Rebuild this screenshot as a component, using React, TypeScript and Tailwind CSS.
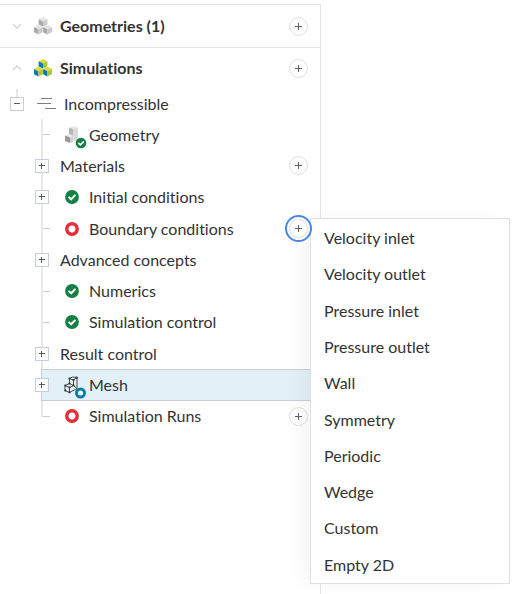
import React from "react";

type Status = "done" | "open";
type Node = {
  label: string;
  icon?: "geometry" | "mesh" | Status;
  expandable?: boolean;
  add?: boolean;
  selected?: boolean;
  menu?: string[];
};

const boundaryTypes = [
  "Velocity inlet",
  "Velocity outlet",
  "Pressure inlet",
  "Pressure outlet",
  "Wall",
  "Symmetry",
  "Periodic",
  "Wedge",
  "Custom",
  "Empty 2D",
];

const nodes: Node[] = [
  { label: "Geometry", icon: "geometry" },
  { label: "Materials", expandable: true, add: true },
  { label: "Initial conditions", icon: "done", expandable: true },
  { label: "Boundary conditions", icon: "open", add: true, menu: boundaryTypes },
  { label: "Advanced concepts", expandable: true },
  { label: "Numerics", icon: "done" },
  { label: "Simulation control", icon: "done" },
  { label: "Result control", expandable: true },
  { label: "Mesh", icon: "mesh", expandable: true, selected: true },
  { label: "Simulation Runs", icon: "open", add: true },
];

function Cube({ x, y, top, left, right }: { x: number; y: number; top: string; left: string; right: string }) {
  return (
    <g transform={`translate(${x} ${y})`}>
      <path d="M0 2.2 4.4 0 8.8 2.2 4.4 4.4Z" fill={top} />
      <path d="M0 2.2 4.4 4.4V9.6L0 7.4Z" fill={left} />
      <path d="M8.8 2.2 4.4 4.4V9.6L8.8 7.4Z" fill={right} />
    </g>
  );
}

function Cubes({ colored }: { colored?: boolean }) {
  const c = colored
    ? { top: "#e3d935", left: "#0b7aad", right: "#a5c63b" }
    : { top: "#e6e6e6", left: "#aaaaaa", right: "#cbcbcb" };
  return (
    <svg width="18" height="18" viewBox="0 0 18 18" aria-hidden="true">
      <Cube x={4.6} y={0} {...c} />
      <Cube x={0} y={7.8} {...c} />
      <Cube x={9.1} y={7.8} {...c} />
    </svg>
  );
}

function StatusIcon({ status, size }: { status: Status; size: number }) {
  return (
    <svg width={size} height={size} viewBox="0 0 14 14" aria-hidden="true">
      {status === "done" ? (
        <>
          <circle cx="7" cy="7" r="6.9" fill="#118042" />
          <path d="m3.6 6.9 2.5 2.4 4.4-4.4" fill="none" stroke="#fff" strokeWidth="2" />
        </>
      ) : (
        <circle cx="7" cy="7" r="5.200" fill="#fff" stroke="#e52e3a" strokeWidth="3.5" />
      )}
    </svg>
  );
}

function GeometryIcon() {
  return (
    <svg width="24" height="28" viewBox="0 0 24 28" aria-hidden="true">
      <path d="M6 6.5 10.5 5 15 6.500 10.500 8.500Z" fill="#e8e8e8" />
      <path d="M6 6.500 10.500 8.500V15L6 13Z" fill="#b4b4b4" />
      <path d="M15 6.500V18.500L10.500 20.500V8.500Z" fill="#d9d9d9" />
      <path d="M2 14.500 6 13 10.500 15 7 16.500Z" fill="#e9e9e9" />
      <path d="M2 14.500 7 16.500V22L2 20Z" fill="#989898" />
      <path d="M7 16.500 10.500 15V20.500L7 22Z" fill="#cfcfcf" />
      <circle cx="18" cy="22" r="5.300" fill="#118042" />
      <path d="m15.300 21.900 2 2 3.600-3.600" fill="none" stroke="#fff" strokeWidth="1.700" />
    </svg>
  );
}

function MeshIcon() {
  return (
    <svg width="24" height="28" viewBox="0 0 24 28" aria-hidden="true">
      <g fill="none" stroke="#4a4a4a" strokeWidth="1" strokeLinejoin="round">
        <path d="M6.500 7.500 9.500 6 14 6.500V17.500L6.500 21.500 2 19.500V14.500L6.500 12.500Z" />
        <path d="M6.500 7.500 10.500 9 14 6.500M10.500 9V14.500L6.500 16.500V21.500M2 14.500 6.500 16.500M6.500 12.500 10.500 14.500 14 17.500" />
      </g>
      <g fill="#333">
        <circle cx="6.500" cy="7.500" r="1.100" />
        <circle cx="10.500" cy="9" r="1.100" />
        <circle cx="13.800" cy="6.600" r="1.100" />
        <circle cx="2.300" cy="14.500" r="1.100" />
        <circle cx="6.500" cy="16.500" r="1.100" />
        <circle cx="10.500" cy="14.500" r="1.100" />
        <circle cx="2.300" cy="19.500" r="1.100" />
        <circle cx="6.500" cy="21.300" r="1.100" />
        <circle cx="6.500" cy="12.500" r="1.100" />
      </g>
      <circle cx="17.500" cy="22" r="4" fill="#fff" stroke="#0b7cb0" strokeWidth="3" />
    </svg>
  );
}

function NodeIcon({ icon }: { icon: NonNullable<Node["icon"]> }) {
  if (icon === "geometry") return <GeometryIcon />;
  if (icon === "mesh") return <MeshIcon />;
  return (
    <span className="pl-[2px]">
      <StatusIcon status={icon} size={14} />
    </span>
  );
}

function AddButton({ label, active }: { label: string; active?: boolean }) {
  return (
    <button
      type="button"
      aria-label={`Add to ${label}`}
      className={
        "ml-auto mr-3 flex size-[19px] shrink-0 items-center justify-center rounded-full border border-[#dcdfe3] bg-white " +
        (active ? "relative z-20 outline-2 outline-offset-2 outline-[#4a86e8]" : "")
      }
    >
      <svg width="7" height="7" viewBox="0 0 7 7" aria-hidden="true">
        <path d="M0 3.5h7M3.5 0v7" stroke="#5c636b" strokeWidth="1" />
      </svg>
    </button>
  );
}

function Expander({ label, open }: { label: string; open?: boolean }) {
  return (
    <button
      type="button"
      aria-label={`${open ? "Collapse" : "Expand"} ${label}`}
      aria-expanded={!!open}
      className="relative z-[1] flex size-[14px] shrink-0 items-center justify-center border border-[#c9cdd5] bg-white"
    >
      <svg width="6" height="6" viewBox="0 0 6 6" aria-hidden="true">
        <path d={open ? "M0 2.500h6" : "M0 2.500h6M2.500 0v6"} stroke="#555c66" strokeWidth="1" />
      </svg>
    </button>
  );
}

function Section({ title, open }: { title: string; open?: boolean }) {
  return (
    <header className="flex h-10 items-center">
      <button type="button" aria-expanded={!!open} aria-label={`Toggle ${title}`} className="flex w-[34px] justify-center">
        <svg width="10" height="6" viewBox="0 0 10 6" aria-hidden="true">
          <path d={open ? "m1 5 4-4 4 4" : "m1 1 4 4 4-4"} fill="none" stroke="#d3d8de" strokeWidth="1.500" />
        </svg>
      </button>
      <span className="flex w-[26px]">
        <Cubes colored={open} />
      </span>
      <h2 className="font-bold">{title}</h2>
      <AddButton label={title} />
    </header>
  );
}

function Row({ node }: { node: Node }) {
  return (
    <li className="relative flex min-h-0 flex-1 items-center pl-[35px]">
      {node.selected && <div className="absolute inset-y-0 left-[41px] right-0 border border-r-0 border-[#c9ced6] bg-[#e2f1f8]" />}
      <span className="relative flex w-[25px] shrink-0">
        {node.expandable ? <Expander label={node.label} /> : <span className="ml-2 h-px w-[7px] bg-[#cdd0d5]" />}
      </span>
      {node.icon && (
        <span className="relative flex w-[29px] shrink-0 pl-[3px]">
          <NodeIcon icon={node.icon} />
        </span>
      )}
      <span className="relative">{node.label}</span>
      {node.add && <AddButton label={node.label} active={!!node.menu} />}
      {node.menu && (
        <ul
          role="menu"
          className="absolute left-[310px] top-[5px] z-10 flex h-[366px] w-[200px] flex-col border border-[#dfe1e4] bg-white pt-px shadow-[-10px_0_20px_-4px_rgba(0,0,0,0.05)]"
        >
          {node.menu.map((item) => (
            <li key={item} role="none" className="flex flex-1">
              <button type="button" role="menuitem" className="flex-1 px-[13px] text-left">
                {item}
              </button>
            </li>
          ))}
        </ul>
      )}
    </li>
  );
}

export default function App() {
  return (
    <main className="flex min-h-screen bg-white pt-1 font-['Lato',sans-serif] text-base text-[#333] [font-variant-ligatures:none]">
      <nav className="w-[321px] border-r border-t border-[#e2e4e6]">
        <div className="border-b border-[#e2e4e6] py-px">
          <Section title="Geometries (1)" />
        </div>
        <Section title="Simulations" open />
        <div className="ml-4 mt-px h-2 w-[2px] bg-[#e6e7e9]" />
        <div className="flex h-[14px] items-center pl-[10px]">
          <Expander label="Incompressible" open />
          <svg className="ml-[13px] mr-2" width="19" height="12" viewBox="0 0 19 12" aria-hidden="true">
            <path d="M4 .5h11M0 5.500h14M8 10.500h11" stroke="#7d7d7d" strokeWidth="1" />
          </svg>
          <span>Incompressible</span>
        </div>
        <div className="relative pt-2">
          <div className="absolute bottom-[15px] left-[41px] top-2 w-[2px] bg-[#e8e9eb]" />
          <ul className="flex h-[313px] flex-col">
            {nodes.map((node) => (
              <Row key={node.label} node={node} />
            ))}
          </ul>
        </div>
      </nav>
    </main>
  );
}
